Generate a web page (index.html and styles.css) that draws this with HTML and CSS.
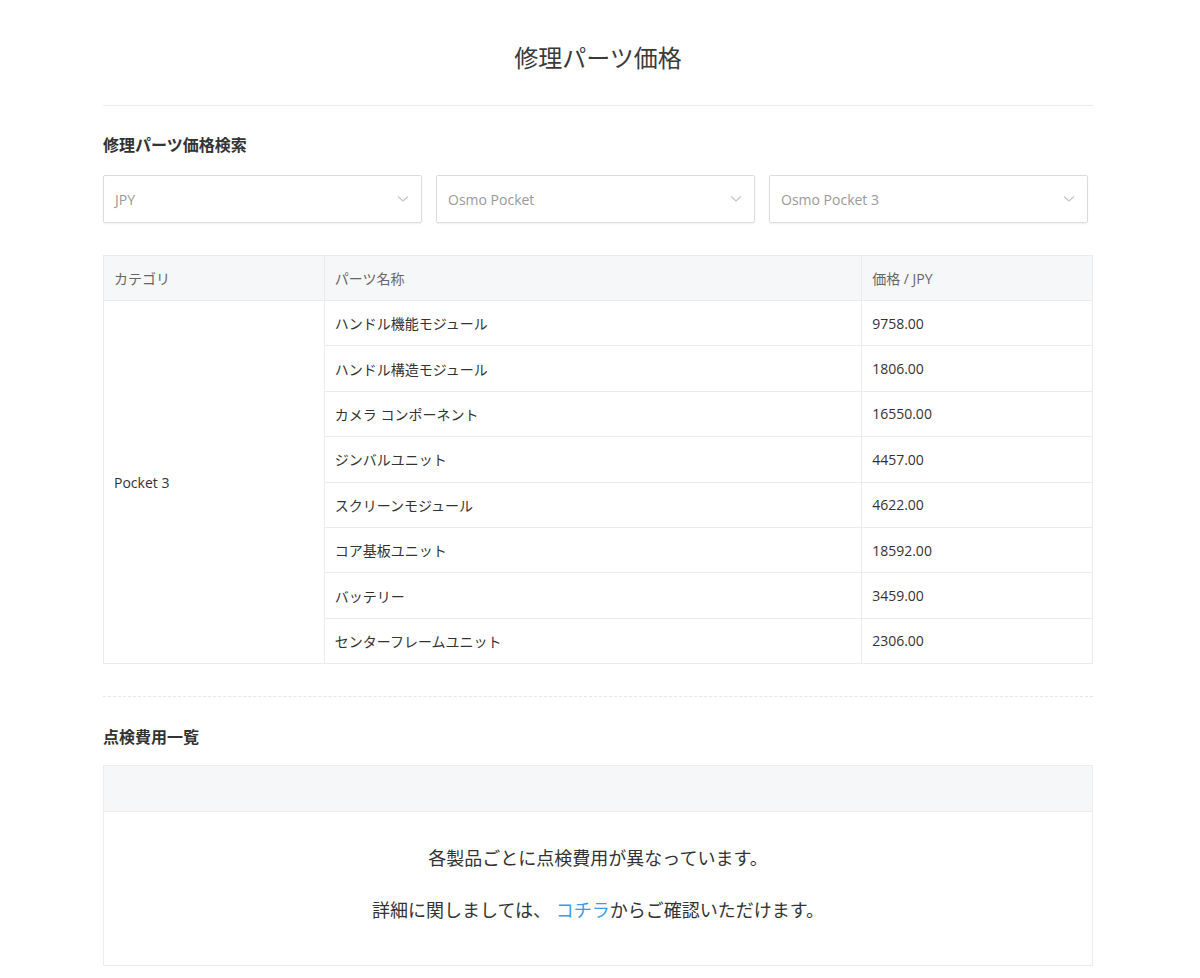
FILE: index.html
```html
<!DOCTYPE html>
<html lang="ja">
<head>
<meta charset="utf-8">
<title>修理パーツ価格</title>
<link rel="stylesheet" href="styles.css">
</head>
<body>
<div class="page">
  <h1 class="title">修理パーツ価格</h1>
  <div class="rule"></div>

  <h2 class="section-title">修理パーツ価格検索</h2>
  <div class="selects">
    <div class="select"><span>JPY</span><svg class="chev" width="12" height="8" viewBox="0 0 12 8"><path d="M1 1.5 L6 6 L11 1.5" fill="none" stroke="#c0c4cc" stroke-width="1.1"/></svg></div>
    <div class="select"><span>Osmo Pocket</span><svg class="chev" width="12" height="8" viewBox="0 0 12 8"><path d="M1 1.5 L6 6 L11 1.5" fill="none" stroke="#c0c4cc" stroke-width="1.1"/></svg></div>
    <div class="select"><span>Osmo Pocket 3</span><svg class="chev" width="12" height="8" viewBox="0 0 12 8"><path d="M1 1.5 L6 6 L11 1.5" fill="none" stroke="#c0c4cc" stroke-width="1.1"/></svg></div>
  </div>

  <table class="parts">
    <thead>
      <tr><th class="c1">カテゴリ</th><th class="c2">パーツ名称</th><th class="c3">価格 / JPY</th></tr>
    </thead>
    <tbody>
      <tr><td rowspan="8">Pocket 3</td><td>ハンドル機能モジュール</td><td>9758.00</td></tr>
      <tr><td>ハンドル構造モジュール</td><td>1806.00</td></tr>
      <tr><td>カメラ コンポーネント</td><td>16550.00</td></tr>
      <tr><td>ジンバルユニット</td><td>4457.00</td></tr>
      <tr><td>スクリーンモジュール</td><td>4622.00</td></tr>
      <tr><td>コア基板ユニット</td><td>18592.00</td></tr>
      <tr><td>バッテリー</td><td>3459.00</td></tr>
      <tr><td>センターフレームユニット</td><td>2306.00</td></tr>
    </tbody>
  </table>

  <div class="dashed"></div>

  <h2 class="section-title second">点検費用一覧</h2>
  <div class="inspect">
    <div class="inspect-head"></div>
    <div class="inspect-body">
      <p>各製品ごとに点検費用が異なっています。</p>
      <p>詳細に関しましては、 <a href="#">コチラ</a>からご確認いただけます。</p>
    </div>
  </div>
</div>
</body>
</html>
```

FILE: styles.css
```css
html, body {
  margin: 0;
  padding: 0;
  background: #fff;
}
body {
  font-family: "Open Sans", "Noto Sans CJK JP", sans-serif;
  color: #333;
}
.page {
  width: 990px;
  margin-left: 103px;
}
.title {
  margin: 0;
  box-sizing: border-box;
  height: 105px;
  padding-top: 40px;
  line-height: 36px;
  font-size: 24px;
  font-weight: 400;
  text-align: center;
  color: #3a3a3a;
}
.rule {
  height: 1px;
  background: #ececec;
}
.section-title {
  margin: 0;
  font-size: 16px;
  font-weight: 700;
  color: #333;
  line-height: 20px;
  padding-top: 29px;
  padding-bottom: 20px;
}
.section-title.second {
  padding-top: 30px;
  padding-bottom: 18px;
}
.selects {
  display: flex;
  gap: 14px;
}
.select {
  width: 319px;
  height: 48px;
  box-sizing: border-box;
  border: 1px solid #dcdcdc;
  border-radius: 2px;
  box-shadow: 0 1px 2px rgba(0,0,0,0.06);
  display: flex;
  align-items: center;
  justify-content: space-between;
  padding: 0 12px 0 11px;
  font-size: 14px;
  color: #999;
}
.chev {
  display: block;
}
.parts {
  margin-top: 32px;
  width: 990px;
  border-collapse: collapse;
  font-size: 14px;
  color: #333;
}
.parts th, .parts td {
  border: 1px solid #ebebeb;
  text-align: left;
  padding: 0 10px;
  height: 44.4px;
  font-weight: 400;
}
.parts th {
  background: #f6f7f9;
  color: #666;
  height: 45px;
}
.parts .c1 { width: 221px; box-sizing: border-box; }
.parts .c2 { width: 538px; box-sizing: border-box; }
.parts .c3 { width: 231px; box-sizing: border-box; }
.dashed {
  margin-top: 32px;
  border-top: 1px dashed #e6e6e6;
}
.inspect {
  border: 1px solid #ececec;
  height: 201px;
  box-sizing: border-box;
}
.inspect-head {
  height: 45px;
  background: #f6f7f9;
  border-bottom: 1px solid #ececec;
}
.inspect-body {
  text-align: center;
  font-size: 18px;
  color: #333;
  padding-top: 33px;
}
.inspect-body p {
  margin: 0 0 26px;
  line-height: 26px;
}
.inspect-body a {
  color: #3a9be8;
  text-decoration: none;
}
```
